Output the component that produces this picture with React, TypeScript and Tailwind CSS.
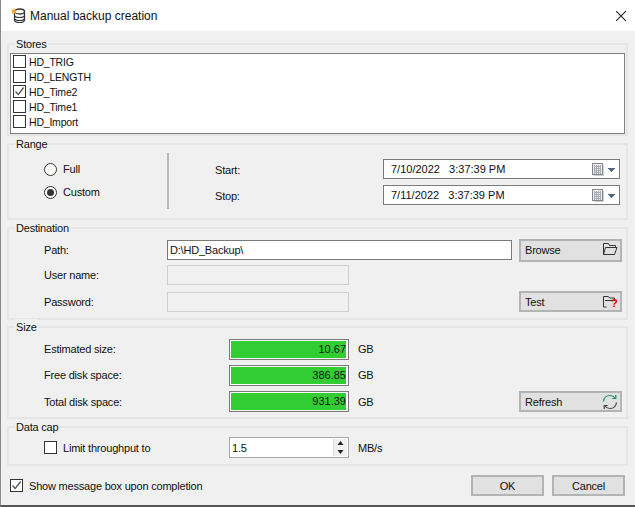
import type { ReactNode } from "react";

const Group = ({ title, className, children }: { title: string; className: string; children: ReactNode }) => (
  <div className={`relative ml-[6px] w-[621px] border-2 border-[#e6e6e6] ${className}`}>
    <span className="absolute left-[6px] top-[-9px] bg-[#f0f0f0] px-[1px] leading-[16px]">{title}</span>
    {children}
  </div>
);

const Check = ({ checked, className = "" }: { checked?: boolean; className?: string }) => (
  <span className={`flex h-[13px] w-[13px] shrink-0 items-center justify-center border border-[#333] bg-white ${className}`}>
    {checked && (
      <svg width="11" height="11" viewBox="0 0 11 11" fill="none" stroke="#555" strokeWidth="1.3">
        <path d="M1.500 5.500 4.200 8.500 9.700 1.500" />
      </svg>
    )}
  </span>
);

const Radio = ({ checked }: { checked?: boolean }) => (
  <span className="flex h-[13px] w-[13px] shrink-0 items-center justify-center rounded-full border border-[#333] bg-white">
    {checked && <span className="h-[7px] w-[7px] rounded-full bg-[#333]" />}
  </span>
);

const Calendar = () => (
  <svg width="24" height="13" viewBox="0 0 24 13" shapeRendering="crispEdges">
    <rect x="0.500" y="0.500" width="10" height="11" fill="#eceef1" stroke="#85878c" />
    <path d="M2 3.500h7M2 5.500h7M2 7.500h7M2 9.500h7" stroke="#a9adb5" />
    <path d="M2.500 2v9M4.500 2v9M6.500 2v9M8.500 2v9" stroke="#a9adb5" />
    <path d="M11.500 2v10.500H2" stroke="#cfcfcf" fill="none" />
    <path d="M15 5h8l-4 4z" fill="#51648a" />
  </svg>
);

const DateField = ({ value }: { value: string }) => (
  <div className="flex h-[20px] w-[237px] items-center justify-between border border-[#7a7a7a] bg-white pl-[7px] pr-[3px] tracking-normal">
    <span className="whitespace-pre">{value}</span>
    <Calendar />
  </div>
);

const Folder = ({ question }: { question?: boolean }) => (
  <span className="relative block h-[16px] w-[16px]">
    <svg width="16" height="14" viewBox="0 0 16 14" fill="none" stroke="#333" strokeWidth="1">
      {question ? (
        <path d="M1.500 13V2.500h5l1 1.500h5v2M1.500 13h3M3 6.500h10" />
      ) : (
        <path d="M1.500 12.500V1.500h5l1 2h6v2M1.500 12.500h11l2.500-7H3.500z" />
      )}
    </svg>
    {question && <span className="absolute left-[9px] top-[3px] text-[11px] font-bold leading-[13px] text-[#f00000]">?</span>}
  </span>
);

const Refresh = () => (
  <svg width="16" height="16" viewBox="0 0 16 16" fill="none" strokeWidth="1.200">
    <path d="M1.500 7.500C2 3.500 5 1.500 8 1.500c2.200 0 4 1 5 2.500" stroke="#1e8c6a" />
    <path d="M13.800 1v3.500h-3.500" stroke="#1e8c6a" />
    <path d="M14.500 8.500c-.5 4-3.500 6-6.500 6-2.200 0-4-1-5-2.500" stroke="#444" />
    <path d="M2.200 15v-3.500h3.500" stroke="#444" />
  </svg>
);

const SideButton = ({ label, icon, className }: { label: string; icon: ReactNode; className: string }) => (
  <div className={`flex w-[103px] items-center justify-between border-2 border-[#b4b4b4] bg-[#e1e1e1] pl-[4px] pr-[2px] ${className}`}>
    <span>{label}</span>
    {icon}
  </div>
);

const DiskRow = ({ label, value }: { label: string; value: string }) => (
  <div className="flex h-[20px] items-center">
    <span className="w-[185px]">{label}</span>
    <div className="h-[21px] w-[120px] border border-[#7a7a7a] bg-white p-[1px]">
      <div className="h-full border-r border-white bg-[#32cd32] text-right leading-[17px] tracking-normal">{value}</div>
    </div>
    <span className="ml-[9px] w-[161px]">GB</span>
  </div>
);

const stores = [
  { name: "HD_TRIG", checked: false },
  { name: "HD_LENGTH", checked: false },
  { name: "HD_Time2", checked: true },
  { name: "HD_Time1", checked: false },
  { name: "HD_Import", checked: false },
];

export default function App() {
  return (
    <div className="h-[507px] w-[635px] overflow-hidden border-b-2 border-l border-b-[#555] border-l-[#8a8a8a] bg-[#f0f0f0] font-['Liberation_Sans',sans-serif] text-[11px] leading-[16px] tracking-[-0.2px] text-[#111]">
      <div className="flex h-[31px] items-center justify-between bg-white pl-[9px] pr-[9px]">
        <div className="flex items-center gap-[3px]">
          <svg width="17" height="17" viewBox="0 0 17 17" fill="none">
            <ellipse cx="9.500" cy="4.500" rx="5" ry="2.500" stroke="#333" strokeWidth="1.300" />
            <path d="M4.500 4.500v8.500c0 1.500 2.200 2.500 5 2.500s5-1 5-2.500V4.500M4.500 8c0 1.500 2.200 2.500 5 2.500s5-1 5-2.500M4.500 11c0 1.500 2.200 2.500 5 2.500s5-1 5-2.500" stroke="#333" strokeWidth="1.200" />
            <path d="M4 1l1 2.200 2.300.2-1.700 1.500.5 2.300L4 6l-2.100 1.200.5-2.300L.7 3.400 3 3.200z" fill="#f5a623" />
          </svg>
          <span className="text-[12px] tracking-normal">Manual backup creation</span>
        </div>
        <svg width="10" height="10" viewBox="0 0 10 10" stroke="#222" strokeWidth="1.100">
          <path d="M0 0l10 10M10 0L0 10" />
        </svg>
      </div>

      <Group title="Stores" className="mt-[12px] h-[93px]">
        <div className="mx-[1px] mt-[8px] h-[81px] border border-[#7f7f7f] bg-white pl-[2px] text-[10.5px]">
          {stores.map((s) => (
            <div key={s.name} className="flex h-[15px] items-center gap-[3px]">
              <Check checked={s.checked} />
              <span>{s.name}</span>
            </div>
          ))}
        </div>
      </Group>

      <Group title="Range" className="mt-[7px] h-[77px]">
        <div className="flex items-start pt-[8px]">
          <div className="ml-[35px] flex w-[123px] flex-col gap-[7px] pt-[8px]">
            <div className="flex items-center gap-[6px]"><Radio /><span>Full</span></div>
            <div className="flex items-center gap-[6px]"><Radio checked /><span>Custom</span></div>
          </div>
          <div className="h-[56px] w-[2px] bg-[#b9b9b9]" />
          <div className="ml-[46px] flex flex-col gap-[6px] pt-[6px]">
            <div className="flex items-center"><span className="w-[168px] pt-[2px]">Start:</span><DateField value="7/10/2022   3:37:39 PM" /></div>
            <div className="flex items-center"><span className="w-[168px] pt-[2px]">Stop:</span><DateField value="7/11/2022   3:37:39 PM" /></div>
          </div>
        </div>
      </Group>

      <Group title="Destination" className="mt-[7px] h-[93px]">
        <div className="ml-[35px] flex flex-col pt-[10px]">
          <div className="flex h-[22px] items-center">
            <span className="w-[123px]">Path:</span>
            <div className="h-[20px] w-[345px] border border-[#7a7a7a] bg-white pl-[2px] leading-[18px]">D:\HD_Backup\</div>
            <SideButton label="Browse" icon={<Folder />} className="ml-[7px] h-[23px]" />
          </div>
          <div className="mt-[4px] flex h-[20px] items-center">
            <span className="w-[123px]">User name:</span>
            <div className="h-[20px] w-[182px] border border-[#cfcfcf] bg-[#f0f0f0]" />
          </div>
          <div className="mt-[6px] flex h-[21px] items-center">
            <span className="w-[123px]">Password:</span>
            <div className="h-[20px] w-[182px] border border-[#cfcfcf] bg-[#f0f0f0]" />
            <SideButton label="Test" icon={<Folder question />} className="ml-[170px] h-[21px]" />
          </div>
        </div>
      </Group>

      <Group title="Size" className="mt-[6px] h-[93px]">
        <div className="ml-[35px] flex flex-col gap-[6px] pt-[11px]">
          <DiskRow label="Estimated size:" value="10.67" />
          <DiskRow label="Free disk space:" value="386.85" />
          <div className="flex items-center">
            <DiskRow label="Total disk space:" value="931.39" />
            <SideButton label="Refresh" icon={<Refresh />} className="h-[21px]" />
          </div>
        </div>
      </Group>

      <Group title="Data cap" className="mt-[7px] h-[40px]">
        <div className="ml-[35px] flex items-center pt-[9px]">
          <Check className="mr-[6px]" />
          <span className="w-[166px]">Limit throughput to</span>
          <div className="flex h-[21px] w-[120px] items-center justify-between border border-[#a8a8a8] bg-white pl-[2px] pr-[1px]">
            <span>1.5</span>
            <div className="flex h-[17px] w-[14px] flex-col justify-between border-l border-[#dcdcdc] bg-[#f0f0f0]">
              <svg width="13" height="8" viewBox="0 0 13 8"><path d="M6.500 2l3 4h-6z" fill="#222" /></svg>
              <svg width="13" height="8" viewBox="0 0 13 8"><path d="M6.500 6l3-4h-6z" fill="#222" /></svg>
            </div>
          </div>
          <span className="ml-[9px]">MB/s</span>
        </div>
      </Group>

      <div className="mt-[9px] flex h-[21px] items-center pl-[9px]">
        <Check checked className="mr-[6px]" />
        <span className="w-[442px]">Show message box upon completion</span>
        <div className="flex h-[21px] w-[73px] items-center justify-center border-2 border-[#b4b4b4] bg-[#e1e1e1]">OK</div>
        <div className="ml-[8px] flex h-[21px] w-[73px] items-center justify-center border-2 border-[#b4b4b4] bg-[#e1e1e1]">Cancel</div>
      </div>
    </div>
  );
}
